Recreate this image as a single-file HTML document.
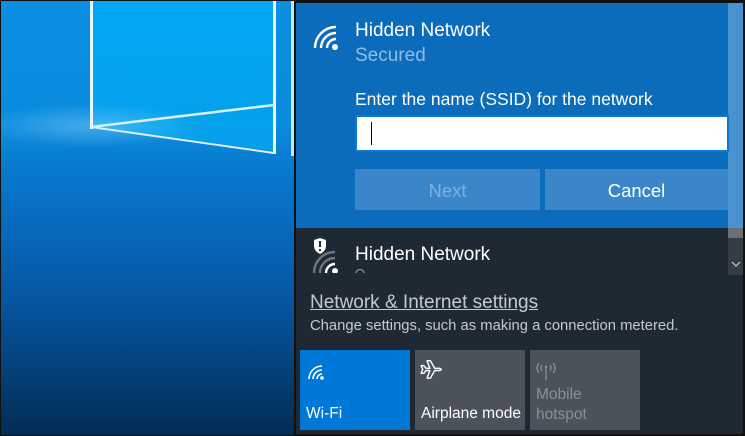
<!DOCTYPE html><html><head><style>
*{margin:0;padding:0;box-sizing:border-box}
body{width:745px;height:436px;overflow:hidden;background:#111;position:relative;font-family:"Liberation Sans",sans-serif}
.abs{position:absolute}
.desk{left:1px;top:1px;width:293px;height:434px;background:linear-gradient(180deg,#0b8fe2 0%,#0a8cdd 28%,#0778cc 40%,#0666b8 55%,#05529a 72%,#033a6c 90%,#022c55 100%);overflow:hidden}
.t{white-space:nowrap}
</style></head><body>
<div class="abs desk">
 <div class="abs" style="left:92px;top:0;width:181px;height:150px;background:linear-gradient(180deg,#02a8f2,#06a0ea);clip-path:polygon(0 0,100% 0,100% 100%,0 84%)"></div>
 <div class="abs" style="left:-60px;top:80px;width:260px;height:90px;background:radial-gradient(ellipse 110px 22px at 150px 45px,rgba(140,210,255,.45),rgba(140,210,255,0))"></div>
 <div class="abs" style="left:89px;top:0;width:3px;height:128px;background:#e8f6ff"></div>
 <div class="abs" style="left:272px;top:0;width:3px;height:153px;background:#e8f6ff"></div>
 <svg class="abs" style="left:0;top:0" width="293" height="160"><line x1="90" y1="126" x2="273" y2="104" stroke="#d8f0ff" stroke-width="2.5"/><line x1="90" y1="126" x2="273" y2="152" stroke="#d8f0ff" stroke-width="2"/></svg>
 <div class="abs" style="left:290px;top:0;width:3px;height:155px;background:#cfe4f0"></div>
</div>
<div class="abs" style="left:296px;top:3px;width:432px;height:225px;background:#0b6cbb"></div>
<div class="abs" style="left:728px;top:3px;width:15px;height:225px;background:#4a91cf"></div>
<div class="abs" style="left:296px;top:228px;width:447px;height:206px;background:#1f2934"></div>
<div class="abs" style="left:728px;top:228px;width:15px;height:10px;background:#6b6f74"></div>
<div class="abs" style="left:728px;top:238px;width:15px;height:37px;background:#353c44"></div>
<svg class="abs" style="left:731px;top:261px" width="10" height="6"><path d="M1 1 L5 5 L9 1" fill="none" stroke="#ccc" stroke-width="1.2"/></svg>
<svg class="abs" style="left:312px;top:23px" width="30" height="28" viewBox="0 0 30 28"><g fill="none" stroke="#fff" stroke-width="2.4"><path d="M3 25 A21 21 0 0 1 24 4"/><path d="M9 25 A15 15 0 0 1 24 10"/><path d="M15 25 A9 9 0 0 1 24 16"/></g><circle cx="23" cy="24" r="3" fill="#fff"/></svg>
<div class="abs t" style="left:355px;top:20px;color:#fff;font-size:19px">Hidden Network</div>
<div class="abs t" style="left:355px;top:45px;color:#8fbbe3;font-size:19px">Secured</div>
<div class="abs t" style="left:355px;top:89px;color:#fff;font-size:17.5px">Enter the name (SSID) for the network</div>
<div class="abs" style="left:355px;top:115px;width:374px;height:37px;background:#fff;border:2px solid #0a78d7"></div>
<div class="abs" style="left:371px;top:122px;width:1px;height:23px;background:#000"></div>
<div class="abs t" style="left:355px;top:169px;width:185px;height:41px;background:#3a86c8;color:#7fb1de;font-size:18.5px;text-align:center;line-height:43px">Next</div>
<div class="abs t" style="left:545px;top:169px;width:183px;height:41px;background:#3a86c8;color:#fff;font-size:18.5px;text-align:center;line-height:43px">Cancel</div>
<svg class="abs" style="left:310px;top:238px" width="34" height="36" viewBox="0 0 34 36"><g fill="none" stroke="#6c7680" stroke-width="2.4"><path d="M4 35 A21 21 0 0 1 25 14"/><path d="M10 35 A15 15 0 0 1 25 20"/></g><path d="M16 35 A9 9 0 0 1 25 26" fill="none" stroke="#fff" stroke-width="2.4"/><circle cx="25" cy="33" r="3" fill="#fff"/><path d="M4 2 L10 0 L16 2 L16 8 Q16 13 10 16 Q4 13 4 8Z" fill="#fff"/><rect x="9" y="3" width="2" height="6" fill="#1f2934"/><rect x="9" y="11" width="2" height="2" fill="#1f2934"/></svg>
<div class="abs t" style="left:355px;top:244px;color:#fff;font-size:19px">Hidden Network</div>
<div class="abs" style="left:355px;top:267px;width:12px;height:6px;overflow:hidden"><div style="width:10px;height:10px;border:1.5px solid #aab;border-radius:50%;margin-top:2px"></div></div>
<div class="abs" style="left:296px;top:273px;width:432px;height:14px;background:#1f2934"></div>
<div class="abs t" style="left:310px;top:292px;color:#c6c9cc;font-size:19px;text-decoration:underline">Network &amp; Internet settings</div>
<div class="abs t" style="left:310px;top:318px;color:#c6c9cc;font-size:14.8px">Change settings, such as making a connection metered.</div>
<div class="abs" style="left:300px;top:350px;width:110px;height:80px;background:#0078d7"></div>
<svg class="abs" style="left:308px;top:364px" width="18" height="16" viewBox="0 0 18 16"><g fill="none" stroke="#fff" stroke-width="1.6"><path d="M1 15 A13 13 0 0 1 14 2"/><path d="M5 15 A9 9 0 0 1 14 6"/><path d="M9 15 A5 5 0 0 1 14 10"/></g><circle cx="14" cy="14" r="1.8" fill="#fff"/></svg>
<div class="abs t" style="left:306px;top:405px;color:#fff;font-size:15.5px">Wi-Fi</div>
<div class="abs" style="left:415px;top:350px;width:110px;height:80px;background:#4c5259"></div>
<svg class="abs" style="left:420px;top:359px" width="24" height="22" viewBox="0 0 22 20"><path d="M1 6 L3.5 6 L5.5 8.5 L9 8.5 L6.5 1.5 L9.5 1.5 L13.5 8.5 L18 8.5 Q21 9.5 18 10.5 L13.5 10.5 L9.5 17.5 L6.5 17.5 L9 10.5 L5.5 10.5 L3.5 13 L1 13 L2.5 9.5Z" fill="none" stroke="#fff" stroke-width="1.3" stroke-linejoin="round"/></svg>
<div class="abs t" style="left:421px;top:405px;color:#fff;font-size:15.5px">Airplane mode</div>
<div class="abs" style="left:530px;top:350px;width:110px;height:80px;background:#4c5259"></div>
<svg class="abs" style="left:535px;top:361px" width="22" height="20" viewBox="0 0 22 20"><g fill="none" stroke="#8a9096" stroke-width="1.3"><path d="M4 2 Q0 7 4 12"/><path d="M7 4 Q5 7 7 10"/><path d="M18 2 Q22 7 18 12"/><path d="M15 4 Q17 7 15 10"/><path d="M11 7 L11 19"/></g><circle cx="11" cy="6" r="1.3" fill="#8a9096"/></svg>
<div class="abs t" style="left:536px;top:385px;color:#8a9096;font-size:15.5px;line-height:20px">Mobile<br>hotspot</div>
</body></html>
